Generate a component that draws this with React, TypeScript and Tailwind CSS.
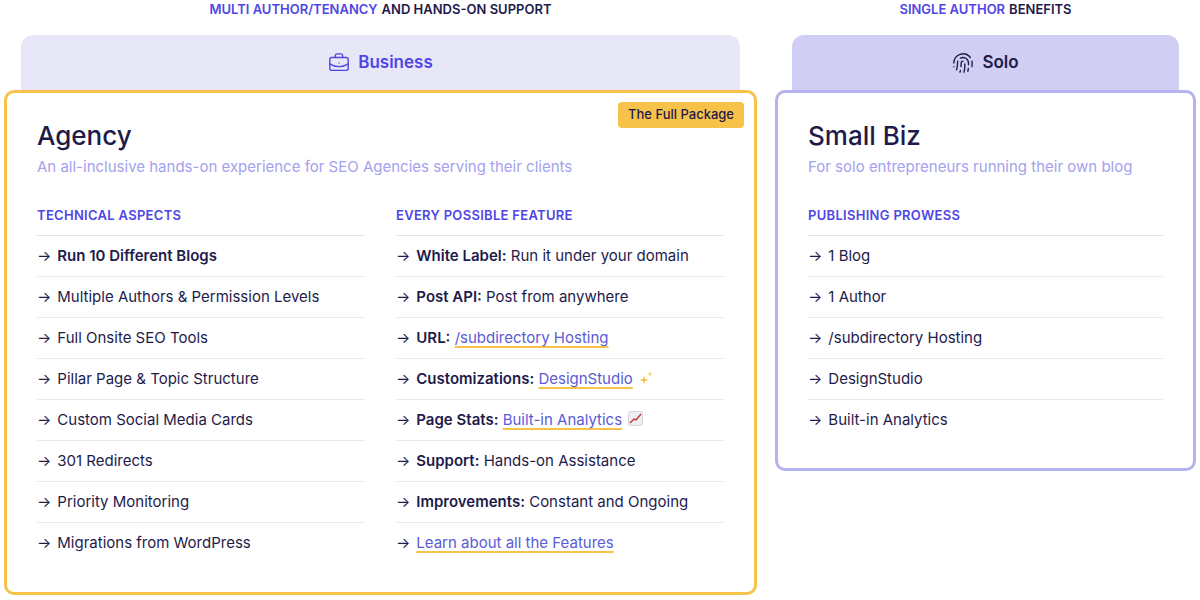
import React from "react";
import { BriefcaseBusiness, Fingerprint } from "lucide-react";

const Link = ({ children }: { children: React.ReactNode }) => (
  <span className="text-[#5b5bd6] underline decoration-[#f7c24a] decoration-2 underline-offset-[3px]">{children}</span>
);

const Row = ({ children, last }: { children: React.ReactNode; last?: boolean }) => (
  <div className={`h-[41px] flex items-center text-[15px] text-[#1e1b4b] ${last ? "" : "border-b border-[#e8e8f0]"}`}>
    <span className="mr-[6px]">→</span>
    <span>{children}</span>
  </div>
);

const Heading = ({ children }: { children: React.ReactNode }) => (
  <div className="text-[13px] leading-[18px] font-semibold tracking-[0.3px] text-[#4f46e5] pb-[11px] border-b border-[#e2e2ec]">{children}</div>
);

const Sparkle = () => (
  <svg width="16" height="16" viewBox="0 0 16 16" className="inline-block ml-[5px] -mt-1">
    <path d="M6 5 L7 9 L11 10 L7 11 L6 15 L5 11 L1 10 L5 9 Z" fill="#f7c24a" />
    <path d="M12 1 L12.6 3.4 L15 4 L12.6 4.6 L12 7 L11.4 4.6 L9 4 L11.4 3.4 Z" fill="#f7c24a" />
  </svg>
);

const Chart = () => (
  <svg width="15" height="15" viewBox="0 0 15 15" className="inline-block ml-[6px] -mt-1">
    <rect x="0.5" y="0.5" width="14" height="14" rx="2" fill="#eeeef2" stroke="#d4d4dc" />
    <path d="M2 12 L6 8 L8 9 L13 3" stroke="#c0392b" strokeWidth="1.4" fill="none" />
  </svg>
);

export default function App() {
  return (
    <div className="w-[1200px] h-[600px] bg-white flex px-[4px] gap-[18px]" style={{ fontFamily: "Inter, 'Noto Sans', sans-serif" }}>
      <div className="w-[753px] flex flex-col">
        <div className="h-[22px] mt-[-1px] flex items-center justify-center text-[13px] font-semibold">
          <span className="text-[#4f46e5]">MULTI AUTHOR/TENANCY</span>
          <span className="text-[#1e1b4b] ml-[4px]">AND HANDS-ON SUPPORT</span>
        </div>
        <div className="mt-[14px] mx-[17px] h-[55px] bg-[#e8e7f8] rounded-t-[12px] flex items-center justify-center gap-[8px] text-[#4f46e5] text-[17px] font-semibold">
          <BriefcaseBusiness size={22} strokeWidth={1.5} />
          <span>Business</span>
        </div>
        <div className="relative border-[3px] border-[#f7c24a] rounded-[10px] px-[30px] pt-[27px] pb-[28px]">
          <div className="absolute right-[10px] top-[9px] bg-[#f7c24a] rounded-[4px] px-[10px] h-[26px] flex items-center text-[13px] font-medium text-[#1e1b4b]">The Full Package</div>
          <div className="text-[26px] leading-[32px] font-medium text-[#1e1b4b]">Agency</div>
          <div className="mt-[4px] text-[15px] leading-[22px] text-[#a3a2ee]">An all-inclusive hands-on experience for SEO Agencies serving their clients</div>
          <div className="mt-[28px] flex gap-[31px]">
            <div className="w-[328px]">
              <Heading>TECHNICAL ASPECTS</Heading>
              <Row><b className="font-semibold">Run 10 Different Blogs</b></Row>
              <Row>Multiple Authors &amp; Permission Levels</Row>
              <Row>Full Onsite SEO Tools</Row>
              <Row>Pillar Page &amp; Topic Structure</Row>
              <Row>Custom Social Media Cards</Row>
              <Row>301 Redirects</Row>
              <Row>Priority Monitoring</Row>
              <Row last>Migrations from WordPress</Row>
            </div>
            <div className="w-[328px]">
              <Heading>EVERY POSSIBLE FEATURE</Heading>
              <Row><b className="font-semibold">White Label:</b> Run it under your domain</Row>
              <Row><b className="font-semibold">Post API:</b> Post from anywhere</Row>
              <Row><b className="font-semibold">URL:</b> <Link>/subdirectory Hosting</Link></Row>
              <Row><b className="font-semibold">Customizations:</b> <Link>DesignStudio</Link><Sparkle /></Row>
              <Row><b className="font-semibold">Page Stats:</b> <Link>Built-in Analytics</Link><Chart /></Row>
              <Row><b className="font-semibold">Support:</b> Hands-on Assistance</Row>
              <Row><b className="font-semibold">Improvements:</b> Constant and Ongoing</Row>
              <Row last><Link>Learn about all the Features</Link></Row>
            </div>
          </div>
        </div>
      </div>
      <div className="w-[421px] flex flex-col">
        <div className="h-[22px] mt-[-1px] flex items-center justify-center text-[13px] font-semibold">
          <span className="text-[#4f46e5]">SINGLE AUTHOR</span>
          <span className="text-[#1e1b4b] ml-[4px]">BENEFITS</span>
        </div>
        <div className="mt-[14px] mx-[17px] h-[55px] bg-[#d0cff3] rounded-t-[12px] flex items-center justify-center gap-[8px] text-[#1e1b4b] text-[17px] font-semibold">
          <Fingerprint size={22} strokeWidth={1.5} />
          <span>Solo</span>
        </div>
        <div className="border-[3px] border-[#b5b3ee] rounded-[10px] px-[30px] pt-[27px] pb-[27px]">
          <div className="text-[26px] leading-[32px] font-medium text-[#1e1b4b]">Small Biz</div>
          <div className="mt-[4px] text-[15px] leading-[22px] text-[#a3a2ee]">For solo entrepreneurs running their own blog</div>
          <div className="mt-[28px]">
            <Heading>PUBLISHING PROWESS</Heading>
            <Row>1 Blog</Row>
            <Row>1 Author</Row>
            <Row>/subdirectory Hosting</Row>
            <Row>DesignStudio</Row>
            <Row last>Built-in Analytics</Row>
          </div>
        </div>
      </div>
    </div>
  );
}
